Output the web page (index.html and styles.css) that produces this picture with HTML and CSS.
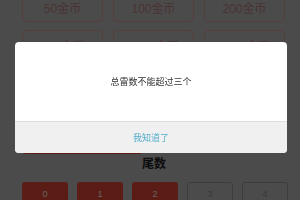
FILE: index.html
```html
<!doctype html>
<html lang="zh">
<head>
    <meta charset="UTF-8">
    <meta name="viewport" content="width=device-width, initial-scale=1.0">
    <title>扫雷</title>
    <link rel="stylesheet" href="styles.css">
</head>
<body>
<div class="page">
    <div class="coins">
        <button class="coin">50金币</button>
        <button class="coin">100金币</button>
        <button class="coin">200金币</button>
        <button class="coin">500金币</button>
        <button class="coin">1000金币</button>
        <button class="coin">2000金币</button>
    </div>
    <div class="mode">
        <button class="mode_btn">单选</button>
    </div>
    <h4>尾数</h4>
    <div class="digits">
        <button class="digit active">0</button>
        <button class="digit active">1</button>
        <button class="digit active">2</button>
        <button class="digit">3</button>
        <button class="digit">4</button>
    </div>
</div>

<!-- 提示弹窗 -->
<div class="overlay">
    <div class="dialog">
        <div class="dialog_msg">总雷数不能超过三个</div>
        <div class="dialog_btn">我知道了</div>
    </div>
</div>
</body>
</html>
```

FILE: styles.css
```css
body {
    margin: 0;
    background-color: #bcbcbc;
    font-family: "Liberation Sans", "Noto Sans CJK SC", sans-serif;
    overflow: hidden;
}

button {
    font-family: inherit;
    padding: 0;
}

.page {
    margin-top: -8px;
    padding: 0 12px 0 22px;
}

.coins {
    display: grid;
    grid-template-columns: repeat(3, 81px);
    gap: 8px 10px;
}

.coin {
    height: 30px;
    background: transparent;
    border: 1px solid #dc9898;
    border-radius: 4px;
    color: #b98080;
    font-size: 12px;
}

.mode {
    display: flex;
    margin-top: 64px;
}

.mode_btn {
    width: 121px;
    height: 30px;
    background-color: #e44837;
    border: none;
    border-radius: 4px;
    color: #fff;
    font-size: 12px;
}

h4 {
    margin: 2px 0 0;
    height: 16px;
    line-height: 16px;
    text-align: center;
    font-size: 12px;
    color: #222;
    padding-right: 2px;
}

.digits {
    display: flex;
    gap: 9px;
    margin-top: 10px;
}

.digit {
    width: 46px;
    height: 22px;
    background: transparent;
    border: 1px solid #9a9a9a;
    border-bottom: none;
    border-radius: 3px 3px 0 0;
    color: #8c8c8c;
    font-size: 9px;
}

.digit.active {
    background-color: #e44837;
    border-color: #e44837;
    color: #fff0f0;
}

/* 遮罩层 */
.overlay {
    position: fixed;
    top: 0;
    left: 0;
    width: 100%;
    height: 100%;
    background-color: rgba(0, 0, 0, 0.6);
    display: flex;
    align-items: flex-start;
    padding: 42px 0 0 15px;
    box-sizing: border-box;
}

.dialog {
    width: 272px;
    background-color: #fff;
    border-radius: 4px;
    overflow: hidden;
}

.dialog_msg {
    height: 79px;
    display: flex;
    align-items: center;
    justify-content: center;
    font-size: 9px;
    color: #333;
}

.dialog_btn {
    height: 31px;
    border-top: 1px solid #dcdcdc;
    background-color: #f0f0f0;
    display: flex;
    align-items: center;
    justify-content: center;
    font-size: 9px;
    color: #55aecb;
}
```
